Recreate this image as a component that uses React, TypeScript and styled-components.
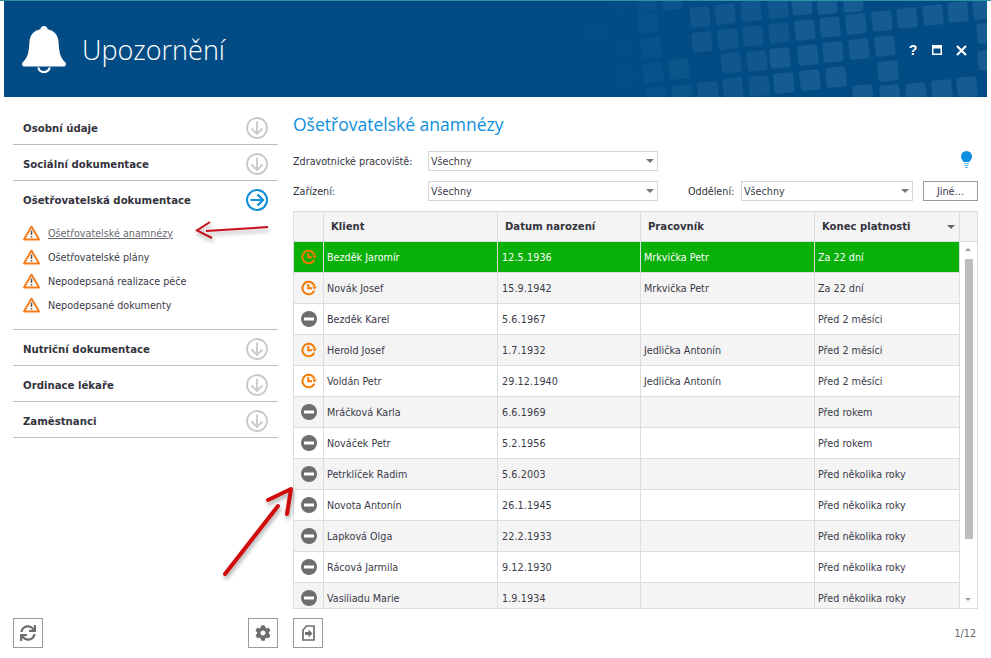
import React from "react";
import styled, { createGlobalStyle } from "styled-components";
import { FaSync, FaCog } from "react-icons/fa";

const Global = createGlobalStyle`
  html, body { margin: 0; padding: 0; background: #fff; }
  body { font-family: "DejaVu Sans", "Liberation Sans", sans-serif; font-size: 10.7px; font-stretch: condensed; color: #3a3a48; }
`;

const Page = styled.div`
  position: relative;
  width: 991px;
  height: 658px;
  overflow: hidden;
  display: flex;
  flex-direction: column;
  border-top: 1px solid #2f93a8;
  box-sizing: border-box;
`;
const Header = styled.header`
  position: relative;
  flex: none;
  height: 96px;
  margin: 0 4px;
  background: #034b84;
  display: flex;
  align-items: center;
  overflow: hidden;
`;
const Pattern = styled.svg`
  position: absolute;
  left: 0;
  top: 0;
`;
const Bell = styled.svg`
  position: relative;
  margin-left: 17px;
  flex: none;
`;
const HeaderTitle = styled.h1`
  position: relative;
  margin: 0 0 0 15px;
  font-family: "Open Sans", sans-serif;
  font-stretch: normal;
  font-weight: 300;
  font-size: 27px;
  line-height: 40px;
  color: #fff;
  margin-top: 2px;
`;
const WinControls = styled.div`
  position: relative;
  margin-left: auto;
  margin-right: 20px;
  margin-top: 2px;
  display: flex;
  align-items: center;
  gap: 14px;
`;
const Help = styled.span`
  font-family: "Liberation Sans", sans-serif;
  font-stretch: normal;
  font-weight: 700;
  font-size: 14px;
  line-height: 14px;
  color: #fff;
  width: 10px;
  text-align: center;
`;
const Body = styled.div`
  flex: 1;
  display: flex;
  padding: 12px 13px 10px;
  gap: 15px;
  min-height: 0;
`;
const Sidebar = styled.aside`
  width: 265px;
  flex: none;
  display: flex;
  flex-direction: column;
`;
const SectionRow = styled.div<{ $open?: boolean }>`
  box-sizing: border-box;
  height: 36px;
  padding: ${(p) => (p.$open ? "2px" : "3px")} 9px 0 10px;
  display: flex;
  align-items: center;
  justify-content: space-between;
  border-bottom: ${(p) => (p.$open ? "none" : "1px solid #bdbdbd")};
  font-weight: 700;
  font-size: 11.3px;
  color: #33333d;
`;
const Items = styled.div`
  padding: 4px 10px 12px;
  border-bottom: 1px solid #bdbdbd;
`;
const Item = styled.div<{ $active?: boolean }>`
  height: 24px;
  display: flex;
  align-items: center;
  gap: 8px;
  color: ${(p) => (p.$active ? "#6a6a74" : "#3a3a48")};
  text-decoration: ${(p) => (p.$active ? "underline" : "none")};
`;
const SideFooter = styled.div`
  margin-top: auto;
  display: flex;
  justify-content: space-between;
`;
const SquareButton = styled.button`
  width: 30px;
  height: 30px;
  padding: 0;
  box-sizing: border-box;
  background: #fff;
  border: 1px solid #9a9a9a;
  color: #6e6e6e;
  display: flex;
  align-items: center;
  justify-content: center;
`;
const Content = styled.main`
  flex: 1;
  min-width: 0;
  display: flex;
  flex-direction: column;
`;
const Title = styled.h2`
  margin: 3px 0 15px;
  font-family: "Open Sans", sans-serif;
  font-stretch: normal;
  font-weight: 400;
  font-size: 17.5px;
  line-height: 24px;
  color: #0e8fdc;
`;
const FormRow = styled.div`
  display: flex;
  align-items: center;
  height: 20px;
  margin-bottom: 10px;
`;
const FieldLabel = styled.label<{ $w: number; $ml?: number }>`
  width: ${(p) => p.$w}px;
  margin-left: ${(p) => p.$ml ?? 0}px;
  flex: none;
  white-space: nowrap;
  color: #33333d;
`;
const Select = styled.div<{ $w: number }>`
  position: relative;
  box-sizing: border-box;
  width: ${(p) => p.$w}px;
  height: 20px;
  padding-left: 2px;
  border: 1px solid #d6d6d6;
  display: flex;
  align-items: center;
  background: #fff;
  &::after {
    content: "";
    position: absolute;
    right: 3px;
    top: 7px;
    border-left: 4px solid transparent;
    border-right: 4px solid transparent;
    border-top: 4px solid #777;
  }
`;
const BulbWrap = styled.div`
  margin-left: auto;
  margin-right: 6px;
  align-self: flex-start;
  display: flex;
`;
const OtherButton = styled.button`
  box-sizing: border-box;
  width: 55px;
  height: 20px;
  margin-left: 10px;
  padding: 0;
  border: 1px solid #9a9a9a;
  background: #fff;
  font: inherit;
  font-stretch: condensed;
  color: #3a3a48;
`;
const Table = styled.div`
  box-sizing: border-box;
  height: 398px;
  border: 1px solid #dcdcdc;
  display: flex;
  flex-direction: column;
  flex: none;
`;
const HeadRow = styled.div`
  flex: none;
  height: 30px;
  box-sizing: border-box;
  display: grid;
  grid-template-columns: 30px 174px 143px 174px 145px 17px;
  background: #f4f4f4;
  border-bottom: 1px solid #dcdcdc;
`;
const HeadCell = styled.div<{ $sorted?: boolean }>`
  position: relative;
  box-sizing: border-box;
  border-right: 1px solid #dcdcdc;
  padding-left: 7px;
  display: flex;
  align-items: center;
  font-weight: 700;
  font-size: 11.2px;
  color: #33333d;
  &:last-child { border-right: none; }
  &::after {
    content: ${(p) => (p.$sorted ? '""' : "none")};
    position: absolute;
    right: 4px;
    top: 13px;
    border-left: 4px solid transparent;
    border-right: 4px solid transparent;
    border-top: 4px solid #666;
  }
`;
const TableBody = styled.div`
  flex: 1;
  min-height: 0;
  display: flex;
`;
const Rows = styled.div`
  width: 666px;
  flex: none;
  overflow: hidden;
`;
const Row = styled.div<{ $bg: string; $fg: string }>`
  height: 31px;
  box-sizing: border-box;
  display: grid;
  grid-template-columns: 30px 174px 143px 174px 145px;
  background: ${(p) => p.$bg};
  color: ${(p) => p.$fg};
  border-bottom: 1px solid #dcdcdc;
`;
const Cell = styled.div`
  box-sizing: border-box;
  border-right: 1px solid #dcdcdc;
  padding-left: 3px;
  display: flex;
  align-items: center;
  white-space: nowrap;
`;
const DateCell = styled(Cell)`
  padding-left: 4px;
  letter-spacing: 0.1px;
`;
const IconCell = styled(Cell)`
  padding-left: 0;
  justify-content: center;
`;
const Scrollbar = styled.div`
  position: relative;
  flex: 1;
  display: flex;
  justify-content: center;
`;
const Thumb = styled.div`
  margin-top: 17px;
  width: 8px;
  height: 280px;
  background: #bdbdbd;
`;
const ScrollArrow = styled.div<{ $up?: boolean }>`
  position: absolute;
  left: 5px;
  ${(p) => (p.$up ? "top: 6px;" : "bottom: 7px;")}
  border-left: 3px solid transparent;
  border-right: 3px solid transparent;
  ${(p) => (p.$up ? "border-bottom: 3px solid #999;" : "border-top: 3px solid #999;")}
`;
const ContentFooter = styled.div`
  margin-top: auto;
  display: flex;
  align-items: center;
  justify-content: space-between;
`;
const Pager = styled.span`
  color: #666;
  margin-right: 2px;
  margin-top: 1px;
`;
const Annotations = styled.svg`
  position: absolute;
  left: 0;
  top: -1px;
  pointer-events: none;
  filter: drop-shadow(1px 3px 2px rgba(0, 0, 0, 0.35));
`;

const rawSquares: [number, number][] = [
  [620, 3], [646, 2], [672, 0], [648, 23], [651, 48], [653, 73], [679, 69], [657, 97], [682, 95], [708, 92],
  [627, 76], [625, 50], [597, 30], [700, 17], [725, 14], [751, 11], [702, 42], [728, 39], [753, 36], [779, 33],
  [731, 63], [757, 61], [733, 88], [759, 86], [784, 83], [802, 5], [827, 4], [853, 2], [805, 30], [830, 27],
  [856, 24], [882, 21], [907, 18], [933, 15], [958, 12], [983, 9], [808, 55], [833, 52], [859, 49], [885, 46],
  [987, 33], [810, 80], [836, 77], [888, 71], [863, 95], [890, 95], [916, 93], [942, 90], [967, 87], [988, 60],
  [778, 8], [780, 58],
];

const squareOpacity = (x: number) => {
  if (x < 630) return 0.012;
  if (x < 660) return 0.06;
  if (x < 700) return 0.08;
  if (x < 780) return 0.11;
  return 0.15;
};

const HeaderPattern = () => (
  <Pattern width="983" height="96" viewBox="4 1 983 96">
    {rawSquares.map(([x, y], i) => (
      <rect
        key={i}
        x={x - 10}
        y={y - 10}
        width="20"
        height="20"
        rx="3"
        fill="#7fc0ee"
        opacity={squareOpacity(x)}
        transform={`rotate(-6 ${x} ${y})`}
      />
    ))}
  </Pattern>
);

const BellIcon = () => (
  <Bell width="46" height="48" viewBox="0 0 46 48">
    <path
      fill="#fff"
      d="M23 1c2 0 3.500 1.300 3.600 3.200 6.600 1.300 10.600 5.700 11 13.200.5 8.800 1.400 15 6.400 19.600 1.700 1.700 1.200 4.500-1.600 4.500H3.600c-2.800 0-3.300-2.800-1.600-4.500 5-4.600 5.900-10.800 6.400-19.600.4-7.500 4.400-11.900 11-13.200C19.500 2.300 21 1 23 1z"
    />
    <path fill="none" stroke="#fff" strokeWidth="2.2" d="M17.500 42.500a5.500 4.500 0 0 0 11 0" />
  </Bell>
);

const CircleArrow = ({ open }: { open?: boolean }) =>
  open ? (
    <svg width="24" height="24" viewBox="0 0 24 24">
      <circle cx="12" cy="12" r="10" fill="none" stroke="#0e8fdc" strokeWidth="2" />
      <path d="M5.500 12H17M12.500 6.500L18 12l-5.500 5.500" fill="none" stroke="#0e8fdc" strokeWidth="2.200" />
    </svg>
  ) : (
    <svg width="24" height="24" viewBox="0 0 24 24">
      <circle cx="12" cy="12" r="10" fill="none" stroke="#c9c9c9" strokeWidth="1.800" />
      <path d="M12 5.500V17M6.500 12.500L12 18l5.500-5.500" fill="none" stroke="#c9c9c9" strokeWidth="1.800" />
    </svg>
  );

const Warning = () => (
  <svg width="17" height="16" viewBox="0 0 17 16" style={{ flex: "none" }}>
    <path d="M8.500 1.500L16 14.500H1z" fill="#fff" stroke="#f47b1c" strokeWidth="1.900" strokeLinejoin="round" />
    <path d="M8.500 5.500v4.500" stroke="#5a5a5a" strokeWidth="1.600" />
    <path d="M8.500 11v1.600" stroke="#5a5a5a" strokeWidth="1.600" />
  </svg>
);

const ClockIcon = () => (
  <svg width="16" height="16" viewBox="0 0 16 16">
    <path d="M13.600 6A6.300 6.300 0 1 0 13.300 10.800" fill="none" stroke="#f47b00" strokeWidth="2" />
    <path d="M11 6.500h5l-2.500 3z" fill="#f47b00" />
    <path d="M7.300 4V8.300H11" fill="none" stroke="#f47b00" strokeWidth="2" />
  </svg>
);

const MinusIcon = () => (
  <svg width="16" height="16" viewBox="0 0 16 16">
    <circle cx="8" cy="8" r="8" fill="#6e6e6e" />
    <rect x="3" y="6.500" width="10" height="3" fill="#fff" />
  </svg>
);

const BulbIcon = () => (
  <svg width="11" height="17" viewBox="0 0 11 17">
    <path d="M5.500 0a5.500 5.500 0 0 1 5.500 5.500c0 2.500-1.700 3.500-2.500 5.500h-6C1.700 9 0 8 0 5.500A5.500 5.500 0 0 1 5.500 0z" fill="#0e8fe0" />
    <path d="M3 12.500h5M3.500 14.500h4" stroke="#5ab4ec" strokeWidth="1" />
    <path d="M4.500 16.500h2" stroke="#0e8fe0" strokeWidth="1" />
  </svg>
);

const ExportIcon = () => (
  <svg width="13" height="16" viewBox="0 0 13 16">
    <path d="M4.500 1H12v14H1V5z" fill="none" stroke="#6e6e6e" strokeWidth="1.700" />
    <path d="M3 7h3.500V4.500L10.500 8.500l-4 4V10H3z" fill="#6e6e6e" />
  </svg>
);

const sections = ["Osobní údaje", "Sociální dokumentace"];
const sectionsAfter = ["Nutriční dokumentace", "Ordinace lékaře", "Zaměstnanci"];
const items = ["Ošetřovatelské anamnézy", "Ošetřovatelské plány", "Nepodepsaná realizace péče", "Nepodepsané dokumenty"];

type R = { icon: "clock" | "minus"; name: string; date: string; worker: string; end: string };
const rows: R[] = [
  { icon: "clock", name: "Bezděk Jaromír", date: "12.5.1936", worker: "Mrkvička Petr", end: "Za 22 dní" },
  { icon: "clock", name: "Novák Josef", date: "15.9.1942", worker: "Mrkvička Petr", end: "Za 22 dní" },
  { icon: "minus", name: "Bezděk Karel", date: "5.6.1967", worker: "", end: "Před 2 měsíci" },
  { icon: "clock", name: "Herold Josef", date: "1.7.1932", worker: "Jedlička Antonín", end: "Před 2 měsíci" },
  { icon: "clock", name: "Voldán Petr", date: "29.12.1940", worker: "Jedlička Antonín", end: "Před 2 měsíci" },
  { icon: "minus", name: "Mráčková Karla", date: "6.6.1969", worker: "", end: "Před rokem" },
  { icon: "minus", name: "Nováček Petr", date: "5.2.1956", worker: "", end: "Před rokem" },
  { icon: "minus", name: "Petrklíček Radim", date: "5.6.2003", worker: "", end: "Před několika roky" },
  { icon: "minus", name: "Novota Antonín", date: "26.1.1945", worker: "", end: "Před několika roky" },
  { icon: "minus", name: "Lapková Olga", date: "22.2.1933", worker: "", end: "Před několika roky" },
  { icon: "minus", name: "Rácová Jarmila", date: "9.12.1930", worker: "", end: "Před několika roky" },
  { icon: "minus", name: "Vasiliadu Marie", date: "1.9.1934", worker: "", end: "Před několika roky" },
];

const rowBg = (i: number) => (i === 0 ? "#08b008" : i % 2 ? "#f4f4f4" : "#fff");

export default function App() {
  return (
    <>
      <Global />
      <Page>
        <Header>
          <HeaderPattern />
          <BellIcon />
          <HeaderTitle>Upozornění</HeaderTitle>
          <WinControls>
            <Help>?</Help>
            <svg width="10" height="10" viewBox="0 0 10 10">
              <path d="M0 0h10v10H0z M1.500 3.500v5h7v-5z" fill="#fff" fillRule="evenodd" />
            </svg>
            <svg width="11" height="11" viewBox="0 0 11 11">
              <path d="M1 1l9 9M10 1l-9 9" stroke="#fff" strokeWidth="2.200" />
            </svg>
          </WinControls>
        </Header>
        <Body>
          <Sidebar>
            {sections.map((s) => (
              <SectionRow key={s}>
                {s}
                <CircleArrow />
              </SectionRow>
            ))}
            <SectionRow $open>
              Ošetřovatelská dokumentace
              <CircleArrow open />
            </SectionRow>
            <Items>
              {items.map((s, i) => (
                <Item key={s} $active={i === 0}>
                  <Warning />
                  <span>{s}</span>
                </Item>
              ))}
            </Items>
            {sectionsAfter.map((s) => (
              <SectionRow key={s}>
                {s}
                <CircleArrow />
              </SectionRow>
            ))}
            <SideFooter>
              <SquareButton aria-label="Obnovit">
                <FaSync size={16} />
              </SquareButton>
              <SquareButton aria-label="Nastavení">
                <FaCog size={16} />
              </SquareButton>
            </SideFooter>
          </Sidebar>
          <Content>
            <Title>Ošetřovatelské anamnézy</Title>
            <FormRow>
              <FieldLabel $w={135}>Zdravotnické pracoviště:</FieldLabel>
              <Select $w={230}>Všechny</Select>
              <BulbWrap>
                <BulbIcon />
              </BulbWrap>
            </FormRow>
            <FormRow>
              <FieldLabel $w={135}>Zařízení:</FieldLabel>
              <Select $w={230}>Všechny</Select>
              <FieldLabel $w={53} $ml={30}>
                Oddělení:
              </FieldLabel>
              <Select $w={172}>Všechny</Select>
              <OtherButton>Jiné…</OtherButton>
            </FormRow>
            <Table>
              <HeadRow>
                <HeadCell />
                <HeadCell>Klient</HeadCell>
                <HeadCell>Datum narození</HeadCell>
                <HeadCell>Pracovník</HeadCell>
                <HeadCell $sorted>Konec platnosti</HeadCell>
                <HeadCell />
              </HeadRow>
              <TableBody>
                <Rows>
                  {rows.map((r, i) => (
                    <Row key={r.name} $bg={rowBg(i)} $fg={i === 0 ? "#fff" : "#3a3a48"}>
                      <IconCell>{r.icon === "clock" ? <ClockIcon /> : <MinusIcon />}</IconCell>
                      <Cell>{r.name}</Cell>
                      <DateCell>{r.date}</DateCell>
                      <Cell>{r.worker}</Cell>
                      <Cell>{r.end}</Cell>
                    </Row>
                  ))}
                </Rows>
                <Scrollbar>
                  <ScrollArrow $up />
                  <Thumb />
                  <ScrollArrow />
                </Scrollbar>
              </TableBody>
            </Table>
            <ContentFooter>
              <SquareButton aria-label="Export">
                <ExportIcon />
              </SquareButton>
              <Pager>1/12</Pager>
            </ContentFooter>
          </Content>
        </Body>
        <Annotations width="991" height="658" viewBox="0 0 991 658">
          <path d="M268 227L206 231" stroke="#c8101a" strokeWidth="2" fill="none" />
          <path d="M210 222L197 230.500L212 238" stroke="#c8101a" strokeWidth="2" fill="none" />
          <path d="M225 574L278 506" stroke="#d10a0a" strokeWidth="4" strokeLinecap="round" fill="none" />
          <path d="M268 500L291 489L287 514" stroke="#d10a0a" strokeWidth="4" strokeLinecap="round" strokeLinejoin="round" fill="none" />
        </Annotations>
      </Page>
    </>
  );
}
